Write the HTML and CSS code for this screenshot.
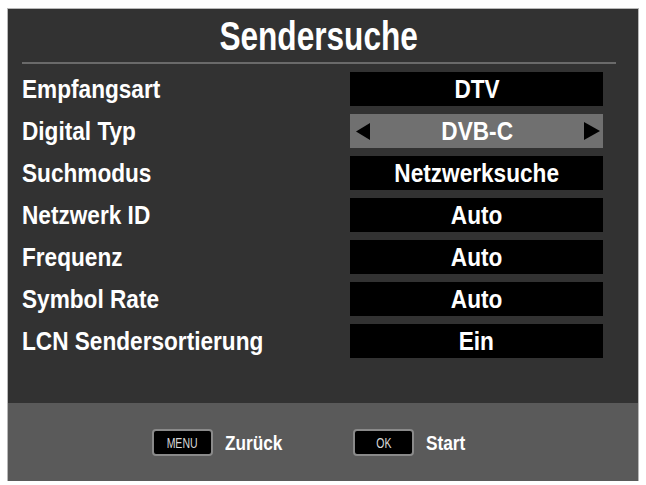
FILE: index.html
```html
<!DOCTYPE html>
<html lang="de">
<head>
<meta charset="utf-8">
<title>Sendersuche</title>
<link rel="stylesheet" href="styles.css">
</head>
<body>
<div class="panel">
  <header class="head">
    <h1 class="title"><span class="nar">Sendersuche</span></h1>
  </header>
  <main class="rows">
    <div class="label"><span class="nar-l">Empfangsart</span></div><div class="val"><span class="nar">DTV</span></div>
    <div class="label"><span class="nar-l">Digital Typ</span></div>
    <div class="val sel">
      <svg class="arr arr-l" width="14" height="17" viewBox="0 0 14 17"><polygon points="14,0 14,17 0,8.5" fill="#000"/></svg>
      <span class="txt"><span class="nar">DVB-C</span></span>
      <svg class="arr arr-r" width="16" height="18" viewBox="0 0 16 18"><polygon points="0,0 0,18 16,9" fill="#000"/></svg>
    </div>
    <div class="label"><span class="nar-l">Suchmodus</span></div><div class="val"><span class="nar">Netzwerksuche</span></div>
    <div class="label"><span class="nar-l">Netzwerk ID</span></div><div class="val"><span class="nar">Auto</span></div>
    <div class="label"><span class="nar-l">Frequenz</span></div><div class="val"><span class="nar">Auto</span></div>
    <div class="label"><span class="nar-l">Symbol Rate</span></div><div class="val"><span class="nar">Auto</span></div>
    <div class="label"><span class="nar-l">LCN Sendersortierung</span></div><div class="val"><span class="nar">Ein</span></div>
  </main>
  <footer class="foot">
    <span class="key"><span class="nar">MENU</span></span><span class="act nar-l">Zurück</span>
    <span class="key key-ok"><span class="nar">OK</span></span><span class="act nar-l">Start</span>
  </footer>
</div>
</body>
</html>
```

FILE: styles.css
```css
html, body {
  margin: 0;
  padding: 0;
  background: #ffffff;
}
body {
  font-family: "Liberation Sans", Arial, sans-serif;
  font-weight: bold;
  color: #ffffff;
}
.nar {
  display: inline-block;
  transform: scaleX(0.85);
  transform-origin: center;
}
.nar-l {
  display: inline-block;
  transform: scaleX(0.87);
  transform-origin: left center;
}
.panel {
  margin: 9px 8px 0 8px;
  width: 630px;
  height: 472px;
  background: #323232;
  box-shadow: 0 0 0 1px #b8b8b8;
  display: flex;
  flex-direction: column;
}
.head {
  margin: 0 22px 0 14px;
  height: 53px;
  border-bottom: 2px solid #6a6a6a;
  display: flex;
  align-items: center;
  justify-content: center;
}
.title {
  margin: 0;
  font-size: 40px;
  line-height: 1;
  font-weight: bold;
}
.title .nar {
  transform: scaleX(0.79);
}
.rows {
  flex: 1;
  display: grid;
  grid-template-columns: 1fr 253px;
  grid-auto-rows: 34px;
  row-gap: 8px;
  align-content: start;
  padding: 8px 35px 0 14px;
}
.label {
  font-size: 26px;
  line-height: 34px;
  white-space: nowrap;
}
.val {
  background: #000000;
  font-size: 26px;
  line-height: 34px;
  text-align: center;
  white-space: nowrap;
}
.val .nar {
  transform: scaleX(0.87);
}
.val.sel {
  background: #707070;
  display: flex;
  align-items: center;
  padding: 0 3px 0 6px;
}
.txt {
  flex: 1;
  text-align: center;
}
.arr {
  display: block;
}
.foot {
  height: 78px;
  background: #5a5a5a;
  display: flex;
  align-items: center;
  padding-left: 144px;
}
.key {
  box-sizing: border-box;
  width: 61px;
  height: 27px;
  border: 2px solid #8a8a8a;
  border-radius: 4px;
  background: #000000;
  color: #d8d8d8;
  font-weight: normal;
  font-size: 15px;
  display: flex;
  align-items: center;
  justify-content: center;
  margin-right: 12px;
}
.key .nar {
  transform: scaleX(0.7);
}
.key-ok {
  margin-left: 58px;
}
.act {
  font-size: 21px;
  line-height: 1;
  transform: scaleX(0.82);
}
```
